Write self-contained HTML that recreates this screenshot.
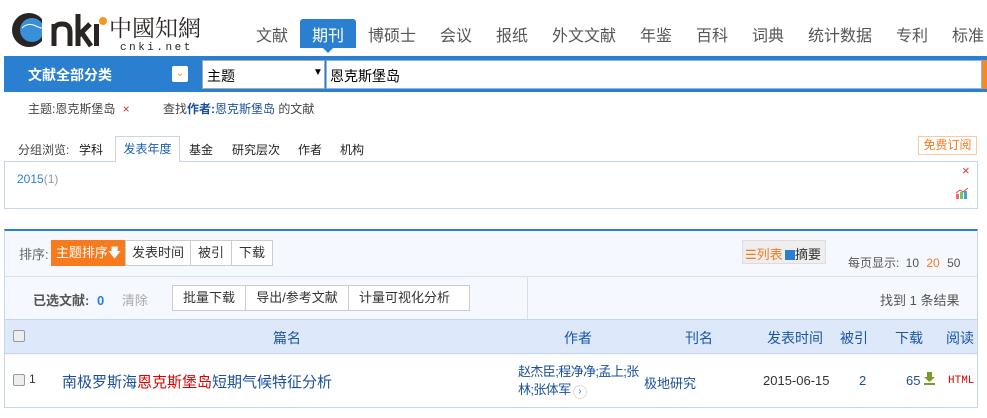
<!DOCTYPE html>
<html><head><meta charset="utf-8"><style>
*{margin:0;padding:0;box-sizing:border-box}
body{width:987px;height:418px;background:#fff;font-family:"Liberation Sans","Noto Sans CJK SC",sans-serif;font-size:12px;color:#333;position:relative;overflow:hidden}
.a{position:absolute;white-space:nowrap}
.nav{font-size:16px;color:#555;top:22px}
.btn{position:absolute;top:240px;height:26px;border:1px solid #ccc;background:#fff;font-size:13px;line-height:24px;text-align:center;color:#333}
.hd{position:absolute;top:328px;font-size:14px;color:#1a56a6}
</style></head><body>
<!-- logo -->
<svg class="a" style="left:6px;top:6px" width="205" height="46" viewBox="0 0 205 46">
<circle cx="23" cy="24" r="17" fill="#2a2422"/>
<circle cx="26" cy="24" r="12" fill="#3a8fd8"/>
<path d="M16 22q6-6 14-2t8 0" stroke="#fff" stroke-width="1" fill="none"/>
<rect x="36" y="8" width="10" height="32" fill="#fff"/>
<path d="M48 18v22M48 26q0-8 8-8t8 8v14" stroke="#2a2422" stroke-width="5" fill="none"/>
<path d="M72 8v32M72 30l12-12M76 27l9 13" stroke="#2a2422" stroke-width="5" fill="none"/>
<rect x="88" y="18" width="5" height="22" fill="#2a2422"/>
<circle cx="97" cy="15" r="4" fill="#f39a1e"/>
<text x="103" y="30" font-size="23" font-family="Noto Serif CJK SC,serif" fill="#2a2422">中國知網</text>
<text x="114" y="44" font-size="11" letter-spacing="2.5" fill="#2a2422" font-family="Liberation Mono">cnki.net</text>
</svg>
<div class="a nav" style="left:256px">文献</div>
<div class="a" style="left:300px;top:19px;width:56px;height:29px;background:#2a7fd0;border-radius:3px 3px 0 0"></div>
<div class="a" style="left:322px;top:47px;width:0;height:0;border:6px solid transparent;border-top-color:#2a7fd0"></div>
<div class="a nav" style="left:312px;color:#fff">期刊</div>
<div class="a nav" style="left:368px">博硕士</div>
<div class="a nav" style="left:440px">会议</div>
<div class="a nav" style="left:496px">报纸</div>
<div class="a nav" style="left:552px">外文文献</div>
<div class="a nav" style="left:640px">年鉴</div>
<div class="a nav" style="left:696px">百科</div>
<div class="a nav" style="left:752px">词典</div>
<div class="a nav" style="left:808px">统计数据</div>
<div class="a nav" style="left:896px">专利</div>
<div class="a nav" style="left:952px">标准</div>
<!-- search -->
<div class="a" style="left:4px;top:56px;width:983px;height:36px;background:#2a7fd0"></div>
<div class="a" style="left:28px;top:65px;font-size:14px;color:#fff;font-weight:bold">文献全部分类</div>
<div class="a" style="left:172px;top:66px;width:16px;height:16px;background:#fff;border-radius:2px;color:#f39a1e;font-size:10px;text-align:center;line-height:16px">&#8964;</div>
<div class="a" style="left:202px;top:60px;width:123px;height:29px;background:#fff;border:1px solid #aaa"></div>
<div class="a" style="left:207px;top:66px;font-size:14px;color:#000">主题</div>
<div class="a" style="left:313px;top:67px;font-size:10px;color:#000">▼</div>
<div class="a" style="left:326px;top:60px;width:656px;height:29px;background:#fff;border:1px solid #8ab8ea"></div>
<div class="a" style="left:330px;top:66px;font-size:14px;color:#000">恩克斯堡岛</div>
<div class="a" style="left:982px;top:60px;width:5px;height:29px;background:#f28a2a"></div>
<div class="a" style="left:28px;top:100px;color:#444">主题:恩克斯堡岛 <span style="color:#c33;margin-left:4px">×</span></div>
<div class="a" style="left:163px;top:100px;color:#444">查找<b style="color:#1a4f9c">作者:</b><span style="color:#1a4f9c">恩克斯堡岛</span> 的文献</div>
<!-- group tabs -->
<div class="a" style="left:18px;top:141px;color:#444">分组浏览:</div>
<div class="a" style="left:79px;top:141px;color:#222">学科</div>
<div class="a" style="left:115px;top:136px;width:65px;height:26px;border:1px solid #c6d6ea;border-bottom:none;background:#fff;z-index:2;color:#1a5fb4;text-align:center;line-height:25px">发表年度</div>
<div class="a" style="left:189px;top:141px;color:#222">基金</div>
<div class="a" style="left:232px;top:141px;color:#222">研究层次</div>
<div class="a" style="left:298px;top:141px;color:#222">作者</div>
<div class="a" style="left:340px;top:141px;color:#222">机构</div>
<div class="a" style="left:918px;top:136px;width:59px;height:19px;border:1px solid #fbc9a0;color:#f77a1e;text-align:center;line-height:17px">免费订阅</div>
<div class="a" style="left:4px;top:161px;width:974px;height:48px;border:1px solid #c6d6ea"></div>
<div class="a" style="left:17px;top:172px;color:#2a7fd0">2015<span style="color:#999">(1)</span></div>
<div class="a" style="left:962px;top:163px;color:#c33;font-size:13px">×</div>
<svg class="a" style="left:955px;top:187px" width="14" height="12"><rect x="1" y="7" width="3" height="5" fill="#f66"/><rect x="5" y="5" width="3" height="7" fill="#6c6"/><rect x="9" y="4" width="3" height="8" fill="#4a9de0"/><path d="M1 6l4-3 3 2 5-4" stroke="#e44" fill="none"/></svg>
<!-- results -->
<div class="a" style="left:4px;top:229px;width:974px;height:179px;border:1px solid #c6d6ea;border-top:2px solid #2a7fd0;background:#f5f8fe"></div>
<div class="a" style="left:19px;top:244px;color:#666;font-size:13px">排序:</div>
<div class="btn" style="left:51px;width:75px;background:#f77a1e;color:#fff;border-color:#f77a1e">主题排序&#129095;</div>
<div class="btn" style="left:125px;width:66px">发表时间</div>
<div class="btn" style="left:190px;width:42px">被引</div>
<div class="btn" style="left:231px;width:42px">下载</div>
<div class="a" style="left:742px;top:240px;width:84px;height:24px;border:1px solid #ddd;background:#eee"></div>
<div class="a" style="left:745px;top:244px;color:#f77a1e;font-size:13px">☰列表</div>
<div class="a" style="left:785px;top:244px;color:#333;font-size:13px"><span style="display:inline-block;width:10px;height:10px;background:#2a7fd0;vertical-align:-1px"></span>摘要</div>
<div class="a" style="left:848px;top:254px;color:#555">每页显示: <span style="margin-left:3px">10</span> <span style="color:#f77a1e;margin-left:4px">20</span> <span style="margin-left:4px">50</span></div>
<div class="a" style="left:5px;top:276px;width:972px;height:1px;background:#d8e2ef"></div>
<div class="a" style="left:33px;top:290px;color:#555;font-weight:bold;font-size:13px">已选文献: <span style="color:#2a7fd0;margin-left:4px">0</span> <span style="color:#aaa;font-weight:normal;margin-left:14px">清除</span></div>
<div class="btn" style="left:172px;top:285px;width:74px">批量下载</div>
<div class="btn" style="left:245px;top:285px;width:104px">导出/参考文献</div>
<div class="btn" style="left:348px;top:285px;width:122px;text-align:left;padding-left:10px">计量可视化分析 <span style="color:#aaa;font-size:9px;margin-left:14px">▼</span></div>
<div class="a" style="left:527px;top:277px;width:1px;height:42px;background:#d8e2ef"></div>
<div class="a" style="left:880px;top:290px;color:#555;font-size:13px">找到 1 条结果</div>
<div class="a" style="left:5px;top:319px;width:972px;height:35px;background:#dde9fb;border-top:1px solid #c6d6ea;border-bottom:1px solid #c6d6ea"></div>
<div class="a" style="left:13px;top:330px;width:12px;height:12px;border:1px solid #999;border-radius:2px;background:#eee"></div>
<div class="hd" style="left:273px">篇名</div>
<div class="hd" style="left:564px">作者</div>
<div class="hd" style="left:685px">刊名</div>
<div class="hd" style="left:767px">发表时间</div>
<div class="hd" style="left:840px">被引</div>
<div class="hd" style="left:895px">下载</div>
<div class="hd" style="left:946px">阅读</div>
<div class="a" style="left:5px;top:355px;width:972px;height:52px;background:#fff"></div>
<div class="a" style="left:13px;top:374px;width:12px;height:12px;border:1px solid #999;border-radius:2px;background:#eee"></div>
<div class="a" style="left:29px;top:372px;color:#333">1</div>
<div class="a" style="left:62px;top:371px;font-size:15px;color:#1a4f9c">南极罗斯海<span style="color:#d00">恩克斯堡岛</span>短期气候特征分析</div>
<div class="a" style="left:518px;top:363px;color:#1a4f9c;font-size:13px;line-height:18px;letter-spacing:-0.6px">赵杰臣;程净净;孟上;张<br>林;张体军<span style="display:inline-block;width:14px;height:14px;border-radius:7px;border:1px solid #ddd;color:#2a7fd0;font-size:10px;text-align:center;line-height:12px;margin-left:2px">›</span></div>
<div class="a" style="left:644px;top:373px;color:#1a4f9c;font-size:13px">极地研究</div>
<div class="a" style="left:763px;top:373px;color:#333;font-size:13px">2015-06-15</div>
<div class="a" style="left:859px;top:373px;color:#1a4f9c;font-size:13px">2</div>
<div class="a" style="left:906px;top:373px;color:#1a4f9c;font-size:13px">65</div>
<svg class="a" style="left:923px;top:372px" width="13" height="13"><path d="M4 0h5v5h3l-5.5 5L1 5h3z" fill="#7a9a2a"/><rect x="1" y="11" width="11" height="2" fill="#7a9a2a"/></svg>
<div class="a" style="left:948px;top:375px;color:#d00;font-size:11px;font-family:'Liberation Mono',monospace">HTML</div>
</body></html>
